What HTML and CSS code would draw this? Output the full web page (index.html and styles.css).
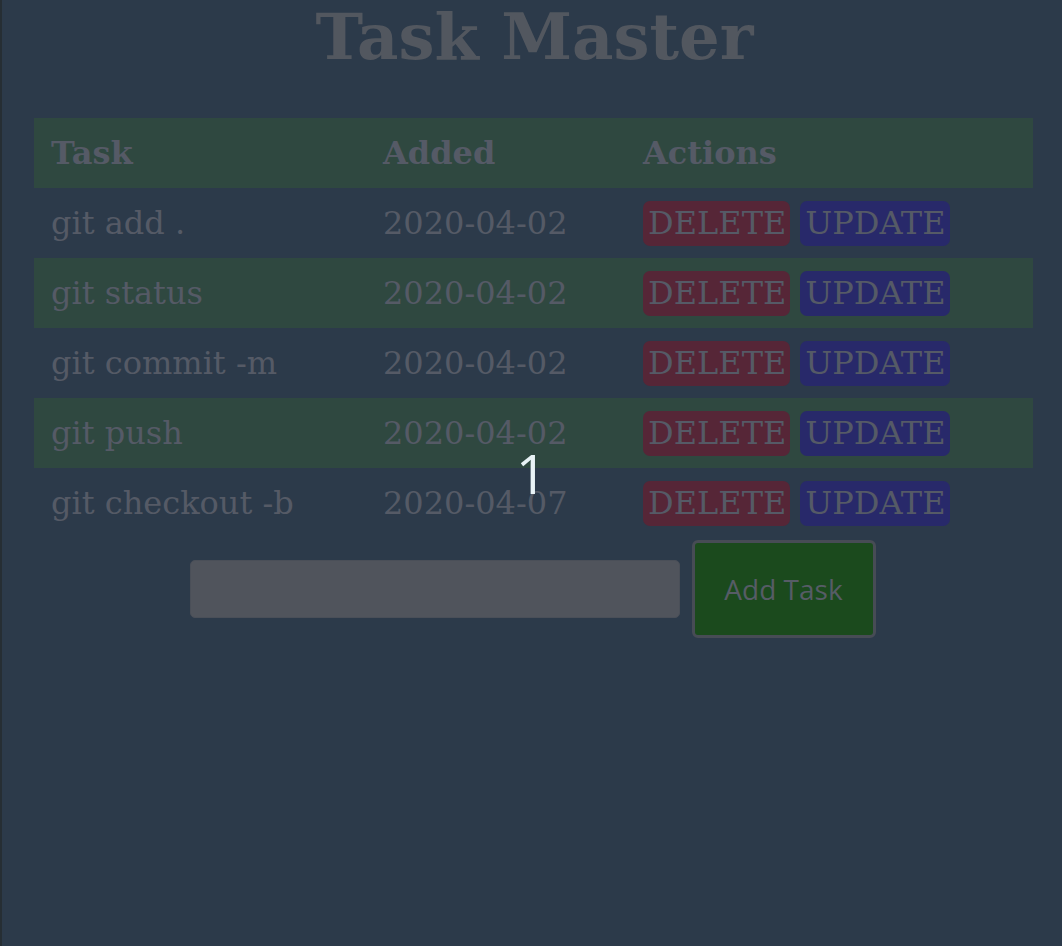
FILE: index.html
```html
<!DOCTYPE html>
<html>
<head>
<meta charset="utf-8">
<link rel="stylesheet" href="styles.css">
</head>
<body>
<div class="page">
  <h1 class="title">Task Master</h1>
  <table class="tasks">
    <thead>
      <tr class="shade"><th class="c1">Task</th><th class="c2">Added</th><th class="c3">Actions</th></tr>
    </thead>
    <tbody>
      <tr><td>git add .</td><td>2020-04-02</td><td><span class="btn del">DELETE</span><span class="btn upd">UPDATE</span></td></tr>
      <tr class="shade"><td>git status</td><td>2020-04-02</td><td><span class="btn del">DELETE</span><span class="btn upd">UPDATE</span></td></tr>
      <tr><td>git commit -m</td><td>2020-04-02</td><td><span class="btn del">DELETE</span><span class="btn upd">UPDATE</span></td></tr>
      <tr class="shade"><td>git push</td><td>2020-04-02</td><td><span class="btn del">DELETE</span><span class="btn upd">UPDATE</span></td></tr>
      <tr><td>git checkout -b</td><td>2020-04-07</td><td><span class="btn del">DELETE</span><span class="btn upd">UPDATE</span></td></tr>
    </tbody>
  </table>
  <form class="addform">
    <input class="field" type="text">
    <button class="add" type="button">Add Task</button>
  </form>
  <div class="counter">1</div>
</div>
</body>
</html>
```
FILE: styles.css
```css
html, body {
  margin: 0;
  padding: 0;
  height: 100%;
}
body {
  background: #2c3a4a;
  border-left: 2px solid #262e34;
  box-sizing: border-box;
  font-family: "DejaVu Serif", serif;
  color: #555a66;
}
.page {
  position: relative;
  padding: 0 27px 0 32px;
}
.title {
  margin: 0;
  height: 118px;
  text-align: center;
  font-size: 64px;
  line-height: 74px;
  font-weight: bold;
  color: #52575f;
}
.tasks {
  width: 999px;
  border-collapse: collapse;
  font-size: 32px;
}
.tasks th, .tasks td {
  height: 70px;
  padding: 0 0 0 17px;
  text-align: left;
  vertical-align: middle;
  box-sizing: border-box;
}
.tasks th {
  font-weight: bold;
  font-size: 32px;
}
.c1 { width: 332px; }
.c2 { width: 260px; }
.shade {
  background: #2f4840;
}
.btn {
  display: inline-block;
  padding: 0 4px 0 5px;
  height: 45px;
  line-height: 45px;
  border-radius: 7px;
  margin-right: 10px;
  vertical-align: middle;
}
.del { background: #562637; }
.upd { background: #28296a; }
.addform {
  display: flex;
  justify-content: center;
  align-items: center;
  gap: 12px;
  margin-top: 2px;
  padding-right: 4px;
}
.field {
  width: 490px;
  height: 58px;
  box-sizing: border-box;
  border: 1px solid #4a4f58;
  border-radius: 5px;
  background: #50545c;
}
.add {
  width: 184px;
  height: 98px;
  box-sizing: border-box;
  border: 3px solid #474c55;
  border-radius: 6px;
  background: #1b4a1d;
  color: #565c66;
  font-family: "Open Sans", sans-serif;
  font-size: 28px;
}
.counter {
  position: absolute;
  left: 514px;
  top: 436px;
  font-family: "Open Sans", sans-serif;
  font-size: 54px;
  color: #e9f3f6;
}
```
